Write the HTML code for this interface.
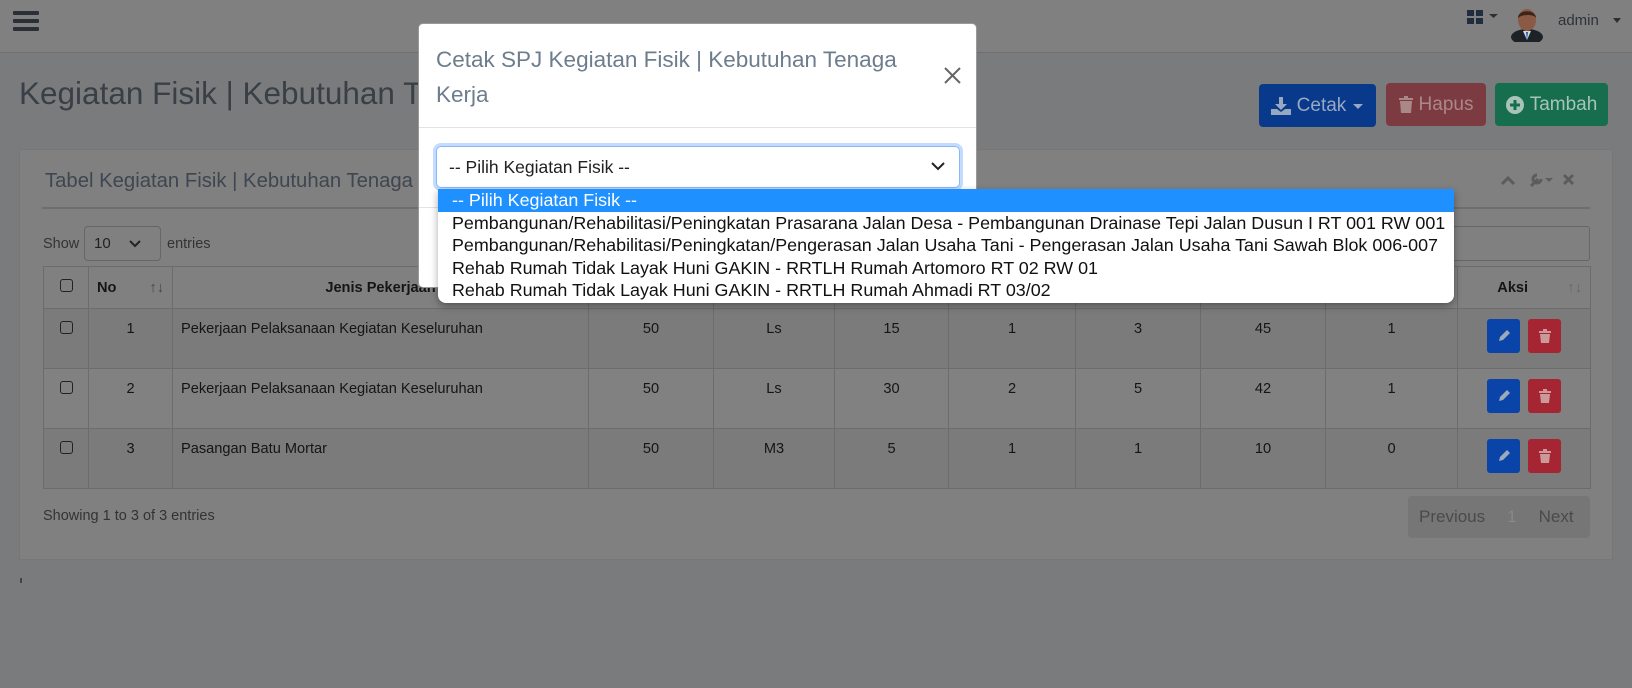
<!DOCTYPE html>
<html><head><meta charset="utf-8"><style>
*{box-sizing:border-box;margin:0;padding:0}
body{width:1632px;height:688px;overflow:hidden;background:#7a7b7c;font-family:"Liberation Sans",sans-serif;position:relative;color:#111}
.abs{position:absolute}
.nav{left:0;top:0;width:1632px;height:53px;background:#808080;border-bottom:1px solid #6f6f6f}
.ham div{position:absolute;left:13px;width:26px;height:4px;background:#2c3036;border-radius:1px}
.btn{position:absolute;height:43px;border-radius:4px;font-size:19px;line-height:43px;text-align:center;display:flex;align-items:center;justify-content:center;gap:6px}
.card{left:19px;top:149px;width:1594px;height:411px;background:#808080;border:1px solid #777}
table{position:absolute;left:43px;top:266px;border-collapse:collapse;font-size:14.6px;color:#151515}
td,th{border:1px solid #6c6c6c;text-align:center;vertical-align:top}
th{height:42px;vertical-align:middle;font-size:14.6px}
td{height:60px;padding-top:12px}
tr.o td{background:#7b7b7b}
tr.e td{background:#818181}
.cb{display:inline-block;width:13px;height:13px;border:1px solid #222;border-radius:3px}
.ab{display:inline-flex;align-items:center;justify-content:center;width:33px;height:34px;border-radius:3px;margin:0 4px;vertical-align:top}
.dd div{height:22.6px;line-height:22.6px;padding-left:14px;font-size:17.9px;white-space:nowrap;color:#111}
</style></head><body>
<div class="abs nav"></div>
<div class="abs ham"><div style="top:11px"></div><div style="top:19px"></div><div style="top:27px"></div></div>
<svg class="abs" style="left:1467px;top:10px" width="34" height="14"><rect x="0" y="0" width="7" height="6" fill="#1f2d3d"/><rect x="9" y="0" width="7" height="6" fill="#1f2d3d"/><rect x="0" y="8" width="7" height="6" fill="#1f2d3d"/><rect x="9" y="8" width="7" height="6" fill="#1f2d3d"/><path d="M22 4h9l-4.5 4z" fill="#2b3035"/></svg>
<svg class="abs" style="left:1509px;top:4px" width="36" height="38"><ellipse cx="18" cy="33" rx="16" ry="8" fill="#1d2227"/><path d="M14 27l4 9 4-9z" fill="#cfd6dc"/><path d="M17 28l1 8 1-8z" fill="#1a5aa8"/><ellipse cx="18" cy="16" rx="9" ry="11" fill="#8a5a44"/><path d="M9 14c0-9 18-9 18 0c-2-4-14-4-18 0z" fill="#3b2418"/></svg>
<div class="abs" style="left:1558px;top:12px;font-size:15px;color:#2e3338">admin</div>
<div class="abs" style="left:1613px;top:18px;border:4px solid transparent;border-top:5px solid #2b3035"></div>

<div class="abs" style="left:19px;top:75px;font-size:31.5px;color:#393f46">Kegiatan Fisik | Kebutuhan T</div>
<div class="btn" style="left:1259px;top:84px;width:117px;background:#08398a;color:#98a8c0"><svg width="20" height="18"><path d="M8 0h4v7h4l-6 6-6-6h4z" fill="#98a8c0"/><path d="M0 12h6l4 3 4-3h6v6H0z" fill="#98a8c0"/></svg>Cetak <svg width="12" height="8"><path d="M1 2h10l-5 5z" fill="#98a8c0"/></svg></div>
<div class="btn" style="left:1386px;top:83px;width:100px;background:#7c3b40;color:#a88"><svg width="14" height="17"><path d="M0 2h14v2H0zM5 0h4v2H5zM1 5h12l-1 12H2z" fill="#a88"/></svg>Hapus</div>
<div class="btn" style="left:1495px;top:83px;width:113px;background:#166e4f;color:#a8c4b8"><svg width="18" height="18"><circle cx="9" cy="9" r="9" fill="#a8c4b8"/><path d="M7.5 4h3v3.5H14v3h-3.5V14h-3v-3.5H4v-3h3.5z" fill="#166e4f"/></svg>Tambah</div>

<div class="abs card"></div>
<div class="abs" style="left:45px;top:170px;font-size:20.3px;color:#3e4650">Tabel Kegiatan Fisik | Kebutuhan Tenaga</div>
<svg class="abs" style="left:1500px;top:172px" width="80" height="16"><path d="M2 12l6-6 6 6" stroke="#5c5c5c" stroke-width="3" fill="none"/><path d="M31 14l7-7M37 3a4 4 0 1 0 4 4" stroke="#5c5c5c" stroke-width="3" fill="none"/><path d="M45 6h8l-4 4z" fill="#5c5c5c"/><path d="M64 3l9 9M73 3l-9 9" stroke="#5c5c5c" stroke-width="3"/></svg>
<div class="abs" style="left:42px;top:207px;width:1548px;height:2px;background:#6e6e6e"></div>
<div class="abs" style="left:43px;top:236px;font-size:14.5px;color:#333">Show</div>
<div class="abs" style="left:84px;top:226px;width:77px;height:35px;border:1px solid #666;border-radius:4px;font-size:15px;padding:8px 9px;color:#222">10 <svg style="margin-left:14px" width="12" height="8"><path d="M1 1l5 5 5-5" stroke="#222" stroke-width="2" fill="none"/></svg></div>
<div class="abs" style="left:167px;top:236px;font-size:14.5px;color:#333">entries</div>
<div class="abs" style="left:1200px;top:226px;width:390px;height:35px;border:1px solid #666;border-radius:3px"></div>

<table>
<tr class="o"><th style="width:45px"><span class="cb"></span></th><th style="width:84px;text-align:left;padding-left:8px">No <span style="float:right;margin-right:8px;color:#444;font-weight:normal">↑↓</span></th><th style="width:416px">Jenis Pekerjaan</th><th style="width:125px"></th><th style="width:121px"></th><th style="width:114px"></th><th style="width:127px"></th><th style="width:125px"></th><th style="width:125px"></th><th style="width:132px"></th><th style="width:133px">Aksi <span style="float:right;margin-right:8px;color:#666;font-weight:normal">↑↓</span></th></tr>
<tr class="o"><td><span class="cb"></span></td><td>1</td><td style="text-align:left;padding-left:8px">Pekerjaan Pelaksanaan Kegiatan Keseluruhan</td><td>50</td><td>Ls</td><td>15</td><td>1</td><td>3</td><td>45</td><td>1</td><td style="padding-top:10px"><span class="ab" style="background:#0a44a8"><svg width="14" height="14"><path d="M2 12l1-4 7-7 3 3-7 7z" fill="#9ab"/></svg></span><span class="ab" style="background:#a52532"><svg width="12" height="14"><path d="M0 2h12v2H0zM4 0h4v2H4zM1 5h10l-1 9H2z" fill="#c99"/></svg></span></td></tr>
<tr class="e"><td><span class="cb"></span></td><td>2</td><td style="text-align:left;padding-left:8px">Pekerjaan Pelaksanaan Kegiatan Keseluruhan</td><td>50</td><td>Ls</td><td>30</td><td>2</td><td>5</td><td>42</td><td>1</td><td style="padding-top:10px"><span class="ab" style="background:#0a44a8"><svg width="14" height="14"><path d="M2 12l1-4 7-7 3 3-7 7z" fill="#9ab"/></svg></span><span class="ab" style="background:#a52532"><svg width="12" height="14"><path d="M0 2h12v2H0zM4 0h4v2H4zM1 5h10l-1 9H2z" fill="#c99"/></svg></span></td></tr>
<tr class="o"><td><span class="cb"></span></td><td>3</td><td style="text-align:left;padding-left:8px">Pasangan Batu Mortar</td><td>50</td><td>M3</td><td>5</td><td>1</td><td>1</td><td>10</td><td>0</td><td style="padding-top:10px"><span class="ab" style="background:#0a44a8"><svg width="14" height="14"><path d="M2 12l1-4 7-7 3 3-7 7z" fill="#9ab"/></svg></span><span class="ab" style="background:#a52532"><svg width="12" height="14"><path d="M0 2h12v2H0zM4 0h4v2H4zM1 5h10l-1 9H2z" fill="#c99"/></svg></span></td></tr>
</table>
<div class="abs" style="left:43px;top:508px;font-size:14.5px;color:#333">Showing 1 to 3 of 3 entries</div>
<div class="abs" style="left:1408px;top:496px;width:182px;height:42px;background:#767676;border-radius:4px;font-size:17px;line-height:42px;color:#4a4a4a"><span style="margin-left:11px">Previous</span><span style="margin-left:22px;color:#888">1</span><span style="margin-left:22px">Next</span></div>
<div class="abs" style="left:20px;top:578px;width:2px;height:5px;background:#444"></div>

<!-- modal -->
<div class="abs" style="left:418px;top:23px;width:559px;height:265px;background:#fff;border-radius:5px;border:1px solid #999"></div>
<div class="abs" style="left:436px;top:42px;width:490px;font-size:22.5px;line-height:35px;color:#6d7d8e">Cetak SPJ Kegiatan Fisik | Kebutuhan Tenaga Kerja</div>
<svg class="abs" style="left:944px;top:67px" width="17" height="17"><path d="M1 1l15 15M16 1L1 16" stroke="#666" stroke-width="2"/></svg>
<div class="abs" style="left:419px;top:127px;width:557px;height:1px;background:#e3e3e3"></div>
<div class="abs" style="left:436px;top:146px;width:524px;height:42px;border:1px solid #86b7fe;border-radius:5px;box-shadow:0 0 0 3px #c2dbfe;font-size:17.5px;line-height:40px;padding-left:12px;color:#222">-- Pilih Kegiatan Fisik --<svg style="position:absolute;right:14px;top:15px" width="14" height="9"><path d="M1 1l6 6 6-6" stroke="#222" stroke-width="2" fill="none"/></svg></div>
<div class="abs" style="left:419px;top:207px;width:557px;height:1px;background:#e3e3e3"></div>

<div class="abs dd" style="left:438px;top:189px;width:1016px;height:114px;background:#fff;border-radius:0 0 8px 8px;box-shadow:0 3px 8px rgba(0,0,0,.35);overflow:hidden">
<div style="background:#1e90ff;color:#fff">-- Pilih Kegiatan Fisik --</div>
<div>Pembangunan/Rehabilitasi/Peningkatan Prasarana Jalan Desa - Pembangunan Drainase Tepi Jalan Dusun I RT 001 RW 001</div>
<div>Pembangunan/Rehabilitasi/Peningkatan/Pengerasan Jalan Usaha Tani - Pengerasan Jalan Usaha Tani Sawah Blok 006-007</div>
<div>Rehab Rumah Tidak Layak Huni GAKIN - RRTLH Rumah Artomoro RT 02 RW 01</div>
<div>Rehab Rumah Tidak Layak Huni GAKIN - RRTLH Rumah Ahmadi RT 03/02</div>
</div>
</body></html>
